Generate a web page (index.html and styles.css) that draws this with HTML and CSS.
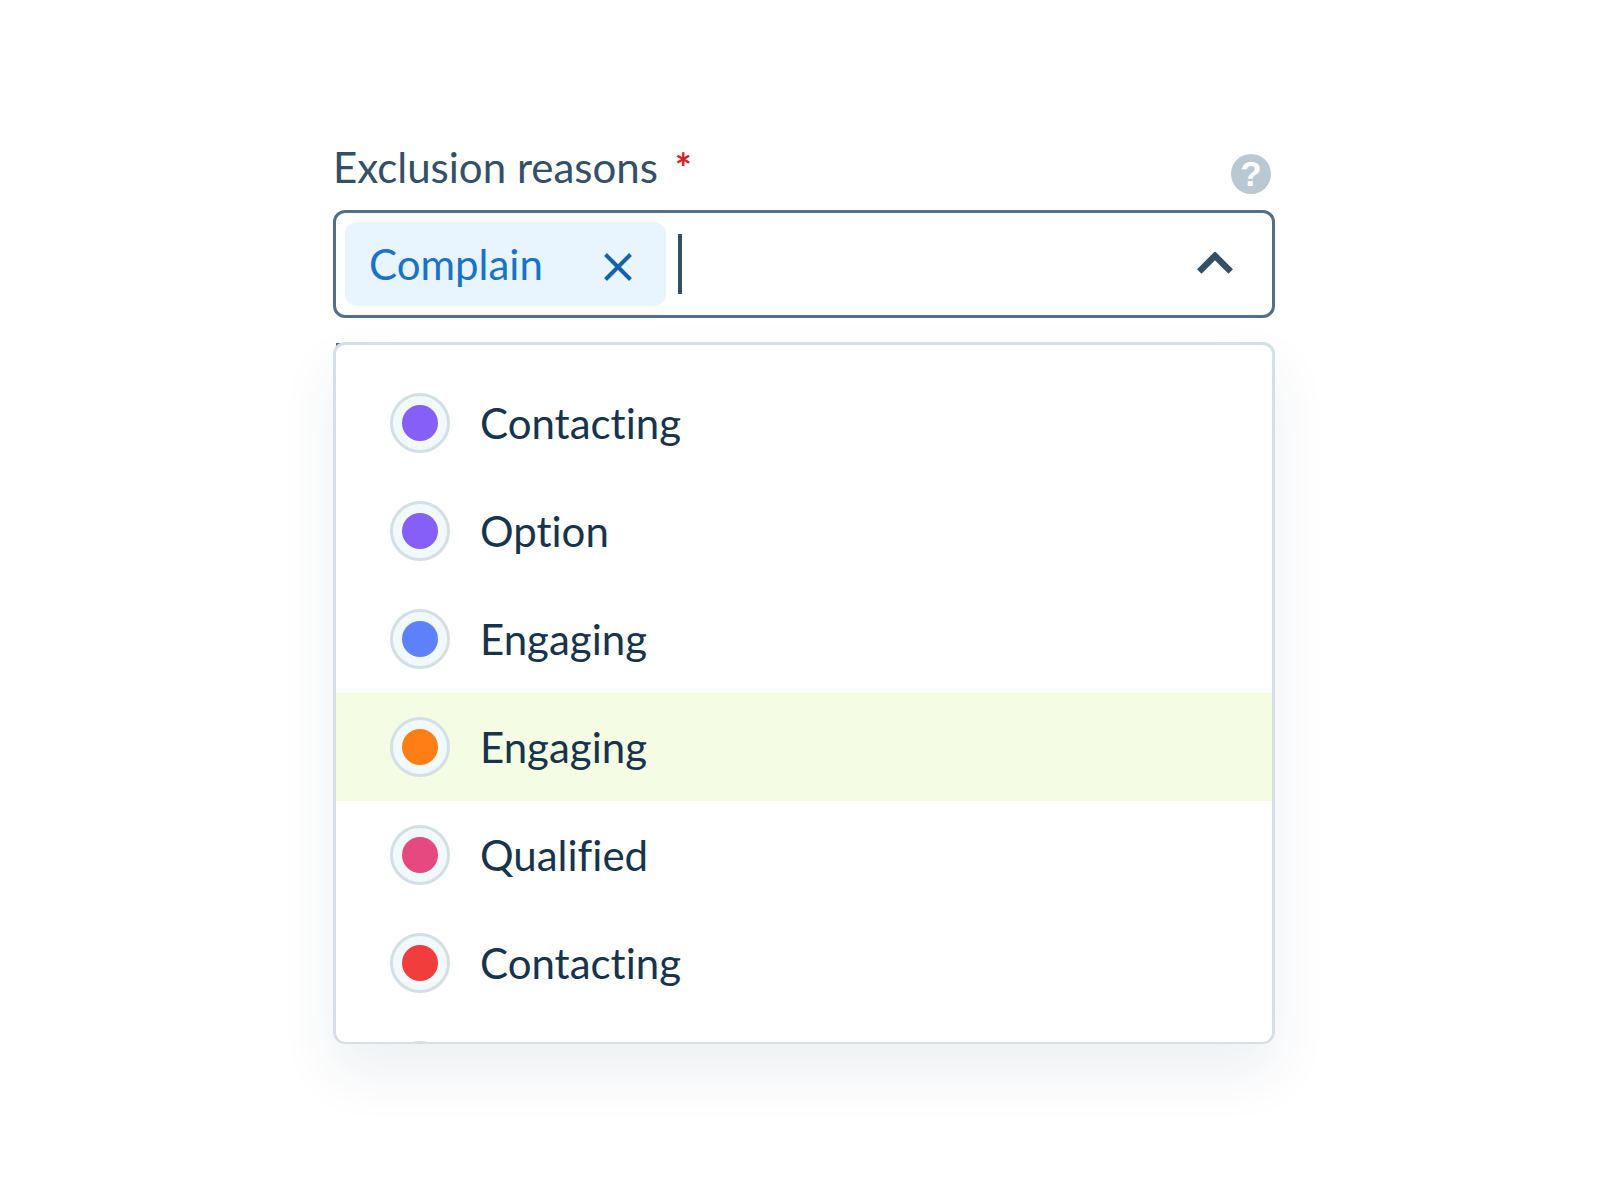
FILE: index.html
```html
<!DOCTYPE html>
<html lang="en">
<head>
  <meta charset="utf-8">
  <meta name="viewport" content="width=device-width, initial-scale=1">
  <title>Exclusion reasons</title>
  <link rel="stylesheet" href="styles.css">
</head>
<body>
  <main class="page">
    <div class="field">
      <div class="field-header">
        <label class="field-label" for="reasons">Exclusion reasons <span class="required">*</span></label>
        <button class="help" type="button" aria-label="Help">?</button>
      </div>

      <div class="combo">
        <span class="tag">
          <span class="text">Complain</span>
          <button class="tag-remove" type="button" aria-label="Remove Complain">
            <svg width="28" height="28" viewBox="0 0 28 28" fill="none" stroke="currentColor" stroke-width="4">
              <path d="M1.5 1.5l25 25M26.5 1.5l-25 25"/>
            </svg>
          </button>
        </span>
        <span class="caret"></span>
        <input class="combo-input" id="reasons" type="text" role="combobox" aria-expanded="true" aria-controls="reason-list" autocomplete="off" required>
        <button class="toggle" type="button" aria-label="Close list">
          <svg width="36" height="22" viewBox="0 0 36 22" fill="none" stroke="currentColor" stroke-width="6.4">
            <path d="M2.300 19.500L18 3.800l15.700 15.700"/>
          </svg>
        </button>
      </div>

      <div class="menu">
        <ul class="options" id="reason-list" role="listbox" aria-label="Exclusion reasons">
          <li class="option" role="option"><span class="dot dot-violet"></span><span class="text">Contacting</span></li>
          <li class="option" role="option"><span class="dot dot-violet"></span><span class="text">Option</span></li>
          <li class="option" role="option"><span class="dot dot-blue"></span><span class="text">Engaging</span></li>
          <li class="option option-active" role="option" aria-selected="true"><span class="dot dot-orange"></span><span class="text">Engaging</span></li>
          <li class="option" role="option"><span class="dot dot-pink"></span><span class="text">Qualified</span></li>
          <li class="option" role="option"><span class="dot dot-red"></span><span class="text">Contacting</span></li>
          <li class="option" role="option"><span class="dot dot-red"></span></li>
        </ul>
      </div>
    </div>
  </main>
</body>
</html>
```
FILE: styles.css
```css
*,
*::before,
*::after {
  box-sizing: border-box;
}

body {
  margin: 0;
  background: #fff;
  color: #18344c;
  font-family: Lato, "Liberation Sans", sans-serif;
  font-size: 42px;
  font-variant-ligatures: none;
  line-height: 60px;
}

button {
  padding: 0;
  border: 0;
  background: none;
  font: inherit;
  cursor: pointer;
}

svg {
  display: block;
}

/* Lato sits low in its line box, so lift it to the optical centre */
.text {
  padding-bottom: 1px;
}

.page {
  padding: 138px 24px;
}

.field {
  max-width: 942px;
  margin: 0 auto;
}

.field-header {
  display: flex;
  justify-content: space-between;
  align-items: flex-end;
  height: 60px;
  margin-bottom: 12px;
  padding-right: 4px;
}

.field-label {
  padding-bottom: 1px;
  color: #335068;
}

.required {
  margin-left: 6px;
  color: #cf2429;
  font-size: 40px;
  font-weight: 700;
  line-height: 1;
}

.help {
  width: 40px;
  height: 40px;
  margin-bottom: 4px;
  border-radius: 50%;
  background: #bac8d2;
  color: #fff;
  font-family: "Liberation Sans", sans-serif;
  font-size: 35px;
  font-weight: 700;
  line-height: 40px;
}

.combo {
  display: flex;
  align-items: center;
  height: 108px;
  padding: 0 39px 0 9px;
  border: 3px solid #52708a;
  border-radius: 12px;
  background: #fff;
}

.tag {
  display: flex;
  flex: none;
  align-items: center;
  gap: 61px;
  height: 84px;
  padding: 0 34px 0 24px;
  border-radius: 12px;
  background: #e8f4fe;
  color: #1a73c7;
}

.tag-remove {
  margin-top: 6px;
  color: #1662ab;
}

.caret {
  flex: none;
  width: 4px;
  height: 60px;
  margin-left: 12px;
  background: #335068;
}

.combo-input {
  flex: 1;
  min-width: 0;
  height: 60px;
  padding: 0;
  border: 0;
  outline: 0;
  background: none;
  color: inherit;
  font: inherit;
}

.toggle {
  margin-bottom: 2px;
  color: #335068;
}

.menu {
  position: relative;
  z-index: 0;
  margin-top: 24px;
  border-radius: 12px;
  box-shadow: 0 28px 56px rgba(24, 52, 90, 0.08);
}

.menu::before {
  content: "";
  position: absolute;
  z-index: -1;
  top: 1px;
  left: 3px;
  width: 6px;
  height: 6px;
  background: #52708a;
}

.options {
  max-height: 702px;
  margin: 0;
  padding: 24px 0 0;
  overflow: hidden;
  border: 3px solid #d5dfe6;
  border-bottom-width: 2px;
  border-radius: 12px;
  background: #fff;
  list-style: none;
}

.option {
  display: flex;
  align-items: center;
  gap: 30px;
  height: 108px;
  padding: 0 54px;
}

.option-active {
  background: #f4fce4;
}

.dot {
  flex: none;
  width: 60px;
  height: 60px;
  padding: 9px;
  border: 3px solid #d5dfe6;
  border-radius: 50%;
  background: #f2f9fb;
}

.dot::before {
  content: "";
  display: block;
  height: 36px;
  border-radius: 50%;
  background: currentColor;
}

.dot-violet {
  color: #855ff8;
}

.dot-blue {
  color: #5e80fa;
}

.dot-orange {
  color: #ff7f16;
}

.dot-pink {
  color: #e6497f;
}

.dot-red {
  color: #f23d3d;
}
```
